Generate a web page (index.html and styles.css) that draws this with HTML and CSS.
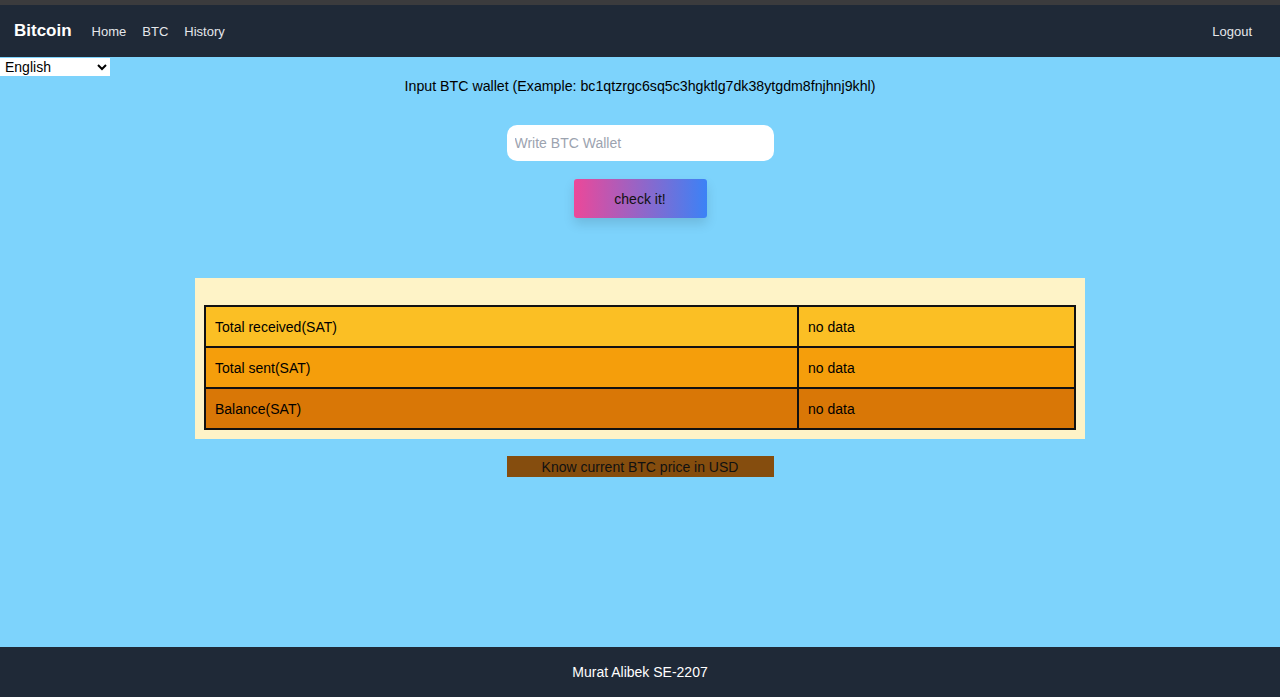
FILE: index.html
```html
<!DOCTYPE html>
<html>
<head>
<meta charset="utf-8">
<link rel="stylesheet" href="styles.css">
</head>
<body>
<div class="topstrip"></div>
<nav class="nav">
  <div class="nav-left">
    <span class="brand">Bitcoin</span>
    <a class="nav-link">Home</a>
    <a class="nav-link">BTC</a>
    <a class="nav-link">History</a>
  </div>
  <a class="nav-link logout">Logout</a>
</nav>
<main class="main">
  <select class="lang"><option>English</option></select>
  <p class="prompt">Input BTC wallet (Example: bc1qtzrgc6sq5c3hgktlg7dk38ytgdm8fnjhnj9khl)</p>
  <input class="wallet" type="text" placeholder="Write BTC Wallet">
  <button class="check">check it!</button>
  <div class="panel">
    <table class="stats">
      <tr class="r1"><td class="c1">Total received(SAT)</td><td>no data</td></tr>
      <tr class="r2"><td class="c1">Total sent(SAT)</td><td>no data</td></tr>
      <tr class="r3"><td class="c1">Balance(SAT)</td><td>no data</td></tr>
    </table>
  </div>
  <button class="price">Know current BTC price in USD</button>
</main>
<footer class="footer">Murat Alibek SE-2207</footer>
</body>
</html>
```

FILE: styles.css
```css
* { box-sizing: border-box; }
html, body { margin: 0; padding: 0; }
body {
  font-family: "Liberation Sans", Arial, sans-serif;
  height: 697px;
  display: flex;
  flex-direction: column;
  background: #7dd3fc;
  overflow: hidden;
}
.topstrip { height: 5px; background: #3b3b3d; flex: none; }
.nav {
  height: 52px;
  flex: none;
  background: #1f2937;
  display: flex;
  align-items: center;
  justify-content: space-between;
  padding: 0 28px 0 14px;
}
.nav-left { display: flex; align-items: center; }
.brand { color: #fff; font-weight: bold; font-size: 17px; margin-right: 20px; }
.nav-link { color: #e5e7eb; font-size: 13px; margin-right: 16px; }
.logout { margin-right: 0; }
.main {
  flex: 1;
  display: flex;
  flex-direction: column;
  align-items: center;
}
.lang {
  align-self: flex-start;
  width: 110px;
  height: 18px;
  margin-top: 1px;
  font-family: "Liberation Sans", Arial, sans-serif;
  font-size: 14px;
  border: none;
  border-radius: 0;
  background: #fff;
  color: #000;
  padding: 0 0 0 1px;
}
.prompt { margin: 1px 0 0; font-size: 14.2px; line-height: 18px; color: #000; }
.wallet {
  margin-top: 30px;
  width: 267px;
  height: 36px;
  border: none;
  border-radius: 10px;
  background: #fff;
  padding: 0 8px;
  font-family: "Liberation Sans", Arial, sans-serif;
  font-size: 14px;
  outline: none;
}
.wallet::placeholder { color: #9ca3af; }
.check {
  margin-top: 18px;
  width: 133px;
  height: 39px;
  border: none;
  border-radius: 3px;
  background: linear-gradient(to right, #ec4899, #3b82f6);
  color: #111;
  font-family: "Liberation Sans", Arial, sans-serif;
  font-size: 14px;
  box-shadow: 0 6px 12px rgba(0, 0, 0, 0.12);
}
.panel {
  margin-top: 60px;
  width: 890px;
  background: #fef3c7;
  padding: 27px 9px 9px;
}
.stats {
  width: 100%;
  border-collapse: collapse;
  border: 2px solid #111;
  font-size: 14px;
  color: #000;
}
.stats td {
  border: 2px solid #111;
  height: 41px;
  padding: 0 9px;
}
.stats .c1 { width: 593px; }
.r1 { background: #fbbf24; }
.r2 { background: #f59e0b; }
.r3 { background: #d97706; }
.price {
  margin-top: 17px;
  width: 267px;
  height: 21px;
  border: none;
  border-radius: 0;
  background: #854d0e;
  color: #111;
  font-family: "Liberation Sans", Arial, sans-serif;
  font-size: 14px;
  padding: 0;
}
.footer {
  height: 50px;
  flex: none;
  background: #1f2937;
  color: #fff;
  font-size: 14px;
  display: flex;
  align-items: center;
  justify-content: center;
}
```
